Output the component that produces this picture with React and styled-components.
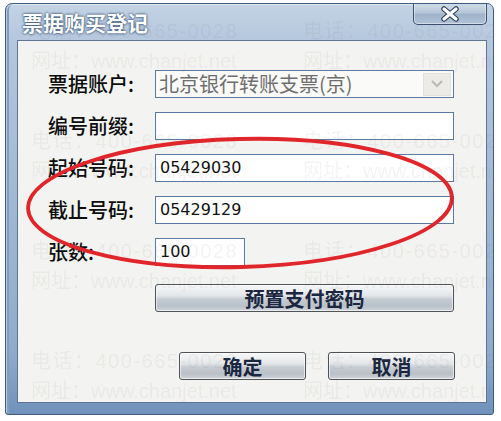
import React from 'react';
import styled, { createGlobalStyle } from 'styled-components';

const cjk = `"Noto Sans CJK SC", "Liberation Sans", sans-serif`;

const GlobalStyle = createGlobalStyle`
	html, body {
		margin: 0;
		padding: 0;
		background: #ffffff;
	}
	* {
		box-sizing: border-box;
	}
`;

const fields = [
	{ label: '票据账户:', value: '北京银行转账支票(京)', select: true },
	{ label: '编号前缀:', value: '' },
	{ label: '起始号码:', value: '05429030' },
	{ label: '截止号码:', value: '05429129' },
	{ label: '张数:', value: '100', short: true },
];

const marks = [0, 1, 2, 3];

function App() {
	return (
		<Page>
			<GlobalStyle />
			<Window>
				<TitleBar>
					<Title>票据购买登记</Title>
					<CloseButton>
						<svg width="22" height="16" viewBox="0 0 22 16">
							<path d="M5 3 L17 13 M17 3 L5 13" stroke="#2f4561" strokeWidth="5.5" strokeLinecap="round" />
							<path d="M5 3 L17 13 M17 3 L5 13" stroke="#ffffff" strokeWidth="3.2" strokeLinecap="round" />
						</svg>
					</CloseButton>
				</TitleBar>
				<Client>
					<Fields>
						{fields.map(f => (
							<Row key={f.label}>
								<Label>{f.label}</Label>
								{f.select ? (
									<SelectBox>
										<SelectText>{f.value}</SelectText>
										<DropButton>
											<svg width="14" height="10" viewBox="0 0 14 10">
												<polyline points="2,2 7,7 12,2" fill="none" stroke="#b9b9b6" strokeWidth="2" />
											</svg>
										</DropButton>
									</SelectBox>
								) : (
									<Input short={f.short}>{f.value}</Input>
								)}
							</Row>
						))}
					</Fields>
					<WideButton>预置支付密码</WideButton>
					<Actions>
						<Button>确定</Button>
						<Button>取消</Button>
					</Actions>
				</Client>
				<Watermark>
					{marks.map(i => (
						<MarkBlock key={i}>
							<MarkLine wide>电话：400-665-0028</MarkLine>
							<MarkLine>网址：www.chanjet.net</MarkLine>
							<MarkLine wide>电话：400-665-0028</MarkLine>
							<MarkLine>网址：www.chanjet.net</MarkLine>
						</MarkBlock>
					))}
				</Watermark>
			</Window>
			<Annotation width="501" height="421" viewBox="0 0 501 421">
				<ellipse
					cx="240"
					cy="203"
					rx="212"
					ry="64"
					transform="rotate(-1.5 240 203)"
					fill="none"
					stroke="#e0262b"
					strokeWidth="3.8"
				/>
			</Annotation>
		</Page>
	);
}

export default App;

const Page = styled.div`
	position: relative;
	width: 501px;
	height: 421px;
	padding: 3px 0 0 5px;
	overflow: hidden;
`;

const Window = styled.div`
	position: relative;
	width: 489px;
	height: 412px;
	display: flex;
	flex-direction: column;
	padding: 0 6px 11px 11px;
	border: 1px solid #3e5b80;
	border-radius: 7px 7px 3px 3px;
	background: linear-gradient(to bottom, #c3d3e5 0%, #b3c6dc 10%, #a5bbd5 40%, #8fabcc 85%, #6f92bb 100%);
	box-shadow: inset 1px 1px 0 rgba(255, 255, 255, 0.5), inset 3px 0 0 #7f9dc2;
	overflow: hidden;
`;

const TitleBar = styled.div`
	height: 36px;
	display: flex;
	justify-content: space-between;
	align-items: flex-start;
`;

const Title = styled.div`
	padding: 6px 0 0 5px;
	font-family: ${cjk};
	font-size: 21px;
	font-weight: 700;
	color: #ffffff;
	line-height: 24px;
	text-shadow: 0 0 3px #3a5679, 0 0 2px #3a5679;
`;

const CloseButton = styled.div`
	margin-top: -1px;
	width: 74px;
	height: 22px;
	display: flex;
	align-items: center;
	justify-content: center;
	border: 1px solid #3a5170;
	border-top: none;
	border-radius: 0 0 5px 5px;
	background: linear-gradient(to bottom, #d3dde9 0%, #b7c7d9 45%, #9fb3ca 55%, #b0c2d6 100%);
	box-shadow: inset 0 0 0 1px rgba(255, 255, 255, 0.45);
`;

const Client = styled.div`
	flex: 1;
	display: flex;
	flex-direction: column;
	padding: 29px 32px 0 30px;
	background: #f3f3f1;
	border: 1px solid #5d7493;
`;

const Fields = styled.div`
	display: flex;
	flex-direction: column;
	gap: 14px;
`;

const Row = styled.div`
	display: flex;
	align-items: center;
	height: 28px;
`;

const Label = styled.div`
	width: 107px;
	flex-shrink: 0;
	font-family: ${cjk};
	font-size: 20px;
	font-weight: 500;
	color: #0d0d0d;
	line-height: 28px;
`;

const SelectBox = styled.div`
	flex: 1;
	height: 28px;
	display: flex;
	align-items: center;
	padding: 0 2px 0 3px;
	background: #fafaf9;
	border: 1px solid #5b7aa3;
`;

const SelectText = styled.div`
	flex: 1;
	font-family: ${cjk};
	font-size: 20px;
	color: #6f6f6f;
	line-height: 26px;
`;

const DropButton = styled.div`
	width: 28px;
	height: 23px;
	display: flex;
	align-items: center;
	justify-content: center;
	background: #ecebe6;
	border: 1px solid #e2e1dc;
`;

const Input = styled.div`
	${props => (props.short ? 'width: 90px;' : 'flex: 1;')}
	height: 28px;
	padding: 0 4px;
	background: #ffffff;
	border: 1px solid #5b7aa3;
	font-family: "DejaVu Sans", "Liberation Sans", sans-serif;
	font-size: 16px;
	color: #111111;
	line-height: 25px;
`;

const buttonFace = `
	height: 28px;
	display: flex;
	align-items: center;
	justify-content: center;
	border: 1px solid #4f5357;
	border-radius: 3px;
	background: linear-gradient(to bottom, #f6f7f8 0%, #e4e7ea 40%, #c6ccd2 55%, #b9c0c7 80%, #d0d5da 100%);
	box-shadow: inset 0 0 0 1px rgba(255, 255, 255, 0.6);
	font-family: ${cjk};
	font-size: 20px;
	font-weight: 700;
	color: #1b2740;
`;

const WideButton = styled.div`
	${buttonFace}
	margin: 18px 0 0 107px;
`;

const Actions = styled.div`
	display: flex;
	justify-content: flex-end;
	gap: 22px;
	margin-top: 40px;
	margin-right: -1px;
`;

const Button = styled.div`
	${buttonFace}
	width: 127px;
`;

const Watermark = styled.div`
	position: absolute;
	top: 12px;
	left: 25px;
	right: 0;
	display: flex;
	flex-direction: column;
	gap: 50px;
	pointer-events: none;
`;

const MarkBlock = styled.div`
	display: grid;
	grid-template-columns: 272px 272px;
	grid-auto-flow: column;
	grid-template-rows: 30px 30px;
`;

const MarkLine = styled.div`
	font-family: "Liberation Sans", "Noto Sans CJK SC", sans-serif;
	font-size: 20px;
	letter-spacing: ${props => (props.wide ? '1.5px' : '0')};
	line-height: 30px;
	white-space: nowrap;
	color: rgba(90, 90, 90, 0.08);
`;

const Annotation = styled.svg`
	position: absolute;
	top: 0;
	left: 0;
	pointer-events: none;
`;
